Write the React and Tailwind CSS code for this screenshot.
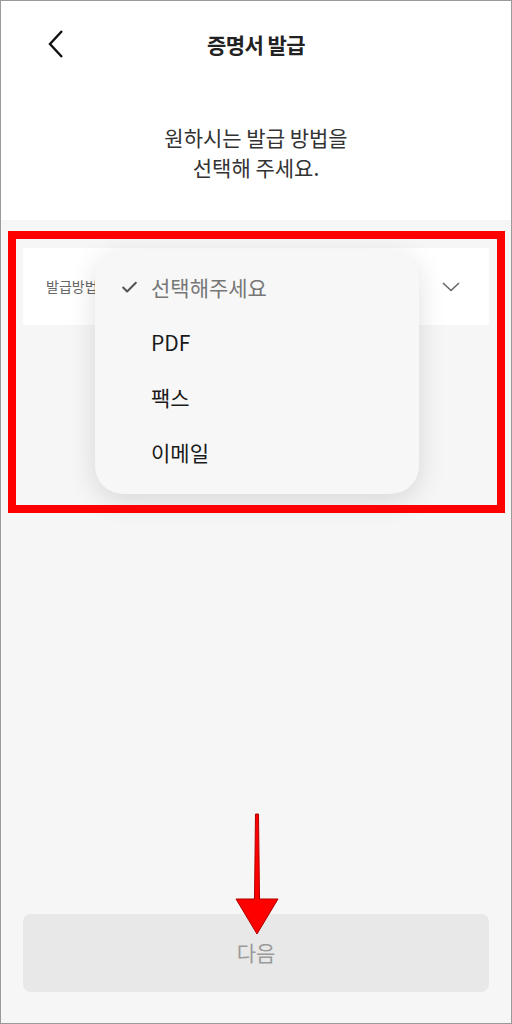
import { Check } from "lucide-react";

const FONT = { fontFamily: '"Noto Sans CJK KR", "Noto Sans", sans-serif' };

/* --------------------------------------------------------------------------
    Certificate issue – pick a delivery method
    -------------------------------------------------------------------------- */

const OPTIONS = ["선택해주세요", "PDF", "팩스", "이메일"];

export default function App() {
  return (
    <div
      style={FONT}
      className="relative w-[512px] h-[1024px] overflow-hidden border border-[#9a9a9a] bg-[#f6f6f6] flex flex-col"
    >
      {/* header + intro */}
      <div className="bg-white">
        <div className="relative h-[88px] flex items-center justify-center">
          <svg
            className="absolute left-[44px] top-[28px]"
            width="22"
            height="30"
            viewBox="0 0 22 30"
            fill="none"
          >
            <path d="M17 2 L5 15 L17 28" stroke="#111" strokeWidth="2.4" />
          </svg>
          <h1 className="text-[21px] font-bold text-[#222] tracking-tight">증명서 발급</h1>
        </div>
        <p className="pt-[33px] pb-[38px] text-center text-[21px] leading-[30px] text-[#333]">
          원하시는 발급 방법을
          <br />
          선택해 주세요.
        </p>
      </div>

      {/* select field */}
      <div className="mx-[22px] mt-[28px] h-[77px] bg-white flex items-center justify-between pl-[23px] pr-[28px]">
        <span className="text-[14px] text-[#666]">발급방법</span>
        <svg width="20" height="12" viewBox="0 0 20 12" fill="none">
          <path d="M2 2 L10 9.5 L18 2" stroke="#666" strokeWidth="1.6" />
        </svg>
      </div>

      <div className="flex-1" />

      {/* next button */}
      <div className="mx-[22px] mb-[31px] h-[78px] rounded-lg bg-[#e8e8e8] flex items-center justify-center">
        <span className="text-[21px] text-[#9a9a9a]">다음</span>
      </div>

      {/* open dropdown menu */}
      <div className="absolute left-[94px] top-[250px] w-[324px] h-[243px] rounded-[28px] bg-[#f7f7f7] shadow-[0_6px_28px_rgba(0,0,0,0.13)] flex flex-col justify-center pb-[5px]">
        {OPTIONS.map((opt, i) => (
          <div key={opt} className="h-[55px] flex items-center">
            <div className="w-[56px] flex justify-end pr-[12px]">
              {i === 0 && <Check size={19} strokeWidth={2.6} className="text-[#555]" />}
            </div>
            <span className={`text-[21px] ${i === 0 ? "text-[#777]" : "text-[#1a1a1a]"}`}>
              {opt}
            </span>
          </div>
        ))}
      </div>

      {/* red annotation box */}
      <div className="absolute left-[7px] top-[230px] w-[497px] h-[282px] border-[8px] border-[#ff0000]" />

      {/* red arrow */}
      <svg
        className="absolute left-[230px] top-[808px]"
        width="52"
        height="130"
        viewBox="0 0 52 130"
      >
        <polygon
          points="24.5,5 27.5,5 28.5,90 47,90 26,125 5,90 23.5,90"
          fill="#ff0000"
          stroke="#b00000"
          strokeWidth="1"
        />
      </svg>
    </div>
  );
}
